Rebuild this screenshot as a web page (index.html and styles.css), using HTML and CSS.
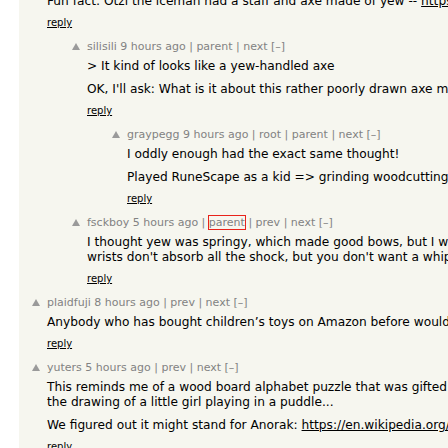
FILE: index.html
```html
<!DOCTYPE html>
<html>
<head>
<meta charset="utf-8">
<link rel="stylesheet" href="styles.css">
</head>
<body>
<div class="page">
  <div class="comment l0 first">
    <div class="vote"></div>
    <div class="body">
      <div class="text"><p>Fun fact: Ötzi the iceman had a staff and axe made of yew -- <a href="#">https://en.wikipedia.org/wiki/Ötzi</a></p></div>
      <div class="reply"><a href="#">reply</a></div>
    </div>
  </div>

  <div class="comment l1">
    <div class="vote"><span class="arrow"></span></div>
    <div class="body">
      <div class="head"><a href="#">silisili</a> <a href="#">9 hours ago</a> | <a href="#">parent</a> | <a href="#">next</a> <a href="#">[–]</a></div>
      <div class="text">
        <p>&gt; It kind of looks like a yew-handled axe</p>
        <p>OK, I'll ask: What is it about this rather poorly drawn axe makes it look like yew?</p>
      </div>
      <div class="reply"><a href="#">reply</a></div>
    </div>
  </div>

  <div class="comment l2">
    <div class="vote"><span class="arrow"></span></div>
    <div class="body">
      <div class="head"><a href="#">graypegg</a> <a href="#">9 hours ago</a> | <a href="#">root</a> | <a href="#">parent</a> | <a href="#">next</a> <a href="#">[–]</a></div>
      <div class="text">
        <p>I oddly enough had the exact same thought!</p>
        <p>Played RuneScape as a kid =&gt; grinding woodcutting</p>
      </div>
      <div class="reply"><a href="#">reply</a></div>
    </div>
  </div>

  <div class="comment l1">
    <div class="vote"><span class="arrow"></span></div>
    <div class="body">
      <div class="head"><a href="#">fsckboy</a> <a href="#">5 hours ago</a> | <a href="#" class="focused">parent</a> | <a href="#">prev</a> | <a href="#">next</a> <a href="#">[–]</a></div>
      <div class="text">
        <p>I thought yew was springy, which made good bows, but I would think for an axe handle you'd want your<br>wrists don't absorb all the shock, but you don't want a whip either</p>
      </div>
      <div class="reply"><a href="#">reply</a></div>
    </div>
  </div>

  <div class="comment l0">
    <div class="vote"><span class="arrow"></span></div>
    <div class="body">
      <div class="head"><a href="#">plaidfuji</a> <a href="#">8 hours ago</a> | <a href="#">prev</a> | <a href="#">next</a> <a href="#">[–]</a></div>
      <div class="text">
        <p>Anybody who has bought children’s toys on Amazon before would recognize this style of drawing</p>
      </div>
      <div class="reply"><a href="#">reply</a></div>
    </div>
  </div>

  <div class="comment l0">
    <div class="vote"><span class="arrow"></span></div>
    <div class="body">
      <div class="head"><a href="#">yuters</a> <a href="#">5 hours ago</a> | <a href="#">prev</a> | <a href="#">next</a> <a href="#">[–]</a></div>
      <div class="text">
        <p>This reminds me of a wood board alphabet puzzle that was gifted to my kid. The letter P was<br>the drawing of a little girl playing in a puddle...</p>
        <p>We figured out it might stand for Anorak: <a href="#">https://en.wikipedia.org/wiki/Anorak</a></p>
      </div>
      <div class="reply"><a href="#">reply</a></div>
    </div>
  </div>
</div>
</body>
</html>
```

FILE: styles.css
```css
html, body {
  margin: 0;
  padding: 0;
  overflow: hidden;
  background: #ffffff;
}

body {
  font-family: "DejaVu Sans", Verdana, sans-serif;
  color: #000000;
}

.page {
  margin-left: 19px;
  background: #f6f6ef;
  min-height: 100vh;
  padding-bottom: 40px;
}

.comment {
  display: flex;
  margin-top: 11px;
}

.comment.first {
  margin-top: 0;
}

.l0 { padding-left: 13px; }
.l1 { padding-left: 53px; }
.l2 { padding-left: 93px; }

.vote {
  flex: none;
  width: 15px;
  padding-top: 3px;
}

.arrow {
  display: block;
  width: 0;
  height: 0;
  border-left: 4px solid transparent;
  border-right: 4px solid transparent;
  border-bottom: 7px solid #9a9a9a;
}

.body {
  flex: none;
}

.head {
  font-size: 11px;
  line-height: 13px;
  color: #828282;
  white-space: nowrap;
}

.head a {
  color: #828282;
  text-decoration: none;
}

.head a.focused {
  outline: 1px solid #e8231b;
}

.text {
  margin-top: 6px;
  font-size: 12.2px;
  line-height: 15px;
  white-space: nowrap;
}

.first .text {
  margin-top: -6px;
}

.text p {
  margin: 8px 0 0 0;
}

.text p:first-child {
  margin-top: 0;
}

.text a {
  color: #000000;
  text-decoration: underline;
}

.reply {
  margin-top: 8px;
  font-size: 10px;
  line-height: 12px;
}

.reply a {
  color: #000000;
  text-decoration: underline;
}
```
